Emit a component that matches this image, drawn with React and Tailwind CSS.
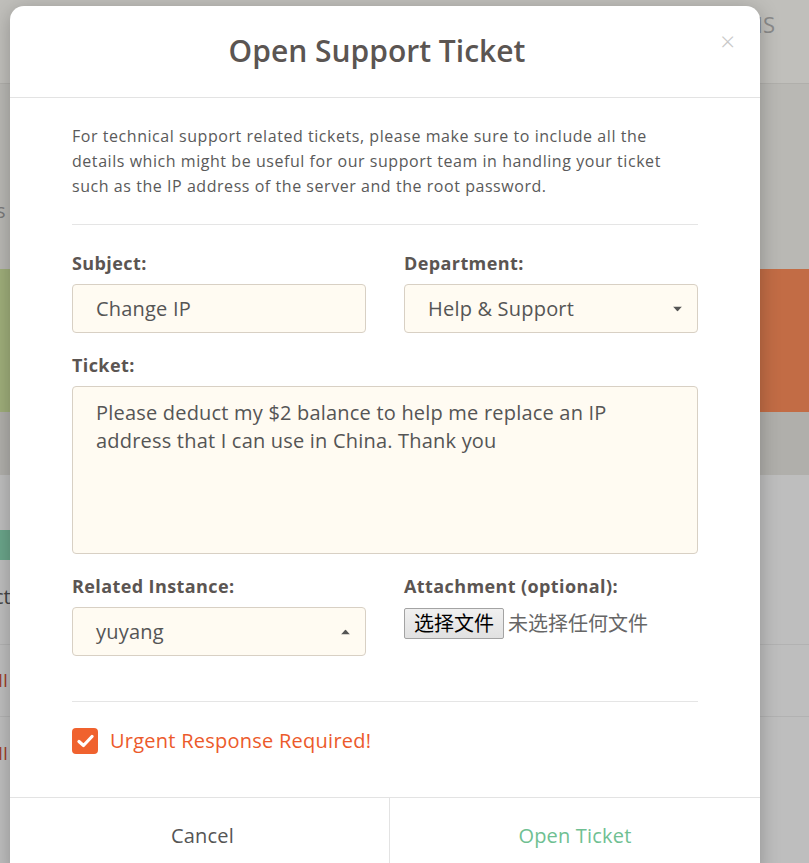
import React from 'react';

const font = { fontFamily: '"Open Sans", "Noto Sans", sans-serif' };

const App = () => {
  return (
    <div className="relative h-[863px] w-[809px] overflow-hidden bg-[#bebebe]" style={font}>

      {/* ================= PAGE BEHIND (dimmed) ================= */}
      <div className="flex flex-col">
        <div className="h-[84px] bg-[#c0bfbb] border-b border-[#b0afab] flex justify-end items-start pt-[8px] pr-[34px]">
          <span className="text-[22px] text-[#8a8a8a]">IS</span>
        </div>
        <div className="h-[185px] bg-[#b9b8b4] pt-[112px]">
          <span className="text-[20px] text-[#7a7a7a] -ml-[4px]">s</span>
        </div>
        <div className="h-[143px] flex justify-between">
          <div className="w-[40px] bg-[#9fae7a]"></div>
          <div className="w-[120px] bg-[#c26c45]"></div>
        </div>
        <div className="h-[63px] bg-[#b0afab]"></div>
        <div className="h-[170px] bg-[#bebebe] border-b border-[#b2b2b2] pt-[55px]">
          <div className="w-[30px] h-[30px] bg-[#6aa58a] rounded-r-[3px]"></div>
          <div className="mt-[22px] text-[20px] text-[#444] -ml-[6px]">ct</div>
        </div>
        <div className="h-[72px] bg-[#bebebe] border-b border-[#b2b2b2] flex items-center">
          <span className="text-[18px] text-[#a0402a] -ml-[2px]">II</span>
        </div>
        <div className="h-[72px] bg-[#bebebe] flex items-center">
          <span className="text-[18px] text-[#a0402a] -ml-[2px]">II</span>
        </div>
      </div>

      {/* ================= MODAL ================= */}
      <div className="absolute left-[10px] top-[6px] w-[750px] bg-white rounded-t-[14px] shadow-[0_4px_20px_rgba(0,0,0,0.25)]">

        {/* header */}
        <div className="relative h-[92px] border-b border-[#e3e3e3] flex items-center justify-center pr-[16px]">
          <h2 className="text-[30px] font-semibold text-[#5b5552] -mt-[3px]">Open Support Ticket</h2>
          <button className="absolute right-[25px] top-[22px] text-[26px] leading-none text-[#c8c8c8] font-light">×</button>
        </div>

        {/* body */}
        <div className="px-[62px] pt-[26px]">
          <p className="text-[16px] leading-[25px] tracking-[0.55px] text-[#5a5a5a]">
            For technical support related tickets, please make sure to include all the<br />
            details which might be useful for our support team in handling your ticket<br />
            such as the IP address of the server and the root password.
          </p>

          <div className="mt-[25px] border-t border-[#e5e5e5]"></div>

          <div className="mt-[26px] grid grid-cols-2 gap-x-[38px]">
            <Field label="Subject:">
              <input
                readOnly
                value="Change IP"
                className="w-full h-[49px] px-[23px] bg-[#fffbf2] border border-[#d8d0c4] rounded-[4px] text-[20px] tracking-[0.2px] text-[#555] outline-none"
              />
            </Field>
            <Field label="Department:">
              <SelectBox value="Help & Support" dir="down" />
            </Field>
          </div>

          <div className="mt-[20px]">
            <Field label="Ticket:">
              <textarea
                readOnly
                value="Please deduct my $2 balance to help me replace an IP address that I can use in China. Thank you"
                className="block w-full h-[168px] pl-[23px] pr-[70px] pt-[12px] bg-[#fffbf2] border border-[#d8d0c4] rounded-[4px] text-[20px] tracking-[0.2px] leading-[28px] text-[#555] outline-none resize-none"
              />
            </Field>
          </div>

          <div className="mt-[20px] grid grid-cols-2 gap-x-[38px]">
            <Field label="Related Instance:">
              <SelectBox value="yuyang" dir="up" />
            </Field>
            <Field label="Attachment (optional):">
              <div className="flex items-center h-[32px]" style={{ fontFamily: '"Noto Sans CJK SC", sans-serif' }}>
                <button className="h-[31px] px-[9px] border border-[#a3a3a3] rounded-[2px] bg-gradient-to-b from-[#f0f0f0] to-[#e1e1e1] text-[20px] leading-none text-black">
                  选择文件
                </button>
                <span className="ml-[4px] text-[20px] text-[#666]">未选择任何文件</span>
              </div>
            </Field>
          </div>

          <div className="mt-[45px] border-t border-[#e5e5e5]"></div>

          <label className="mt-[24px] flex items-center gap-[12px]">
            <span className="w-[26px] h-[26px] rounded-[4px] bg-[#f0622e] flex items-center justify-center">
              <svg width="17" height="14" viewBox="0 0 17 14" fill="none">
                <path d="M2 7.5 L6.5 11.5 L15 2.5" stroke="white" strokeWidth="3.2" strokeLinecap="round" strokeLinejoin="round" />
              </svg>
            </span>
            <span className="text-[20px] tracking-[0.25px] text-[#ec5a2b]">Urgent Response Required!</span>
          </label>
        </div>

        {/* footer */}
        <div className="mt-[41px] border-t border-[#e3e3e3] flex h-[76px]">
          <button className="w-[379px] pl-[6px] text-[20px] tracking-[0.2px] text-[#555]">Cancel</button>
          <button className="flex-1 border-l border-[#e3e3e3] text-[20px] tracking-[0.2px] text-[#6fbf92]">Open Ticket</button>
        </div>
      </div>
    </div>
  );
};

/* ================= REUSABLE ================= */

const Field = ({ label, children }) => (
  <div>
    <div className="text-[18px] leading-[24px] tracking-[0.4px] font-bold text-[#5b5552] mb-[9px]">{label}</div>
    {children}
  </div>
);

const SelectBox = ({ value, dir }) => (
  <div className="relative h-[49px] px-[23px] bg-[#fffbf2] border border-[#d8d0c4] rounded-[4px] flex items-center text-[20px] tracking-[0.2px] text-[#555]">
    <span>{value}</span>
    <span className="absolute right-[15px] top-1/2 -translate-y-1/2">
      {dir === 'down' ? (
        <svg width="9" height="5" viewBox="0 0 9 5"><path d="M0 0 H9 L4.5 5 Z" fill="#555" /></svg>
      ) : (
        <svg width="9" height="5" viewBox="0 0 9 5"><path d="M0 5 H9 L4.5 0 Z" fill="#555" /></svg>
      )}
    </span>
  </div>
);

export default App;
